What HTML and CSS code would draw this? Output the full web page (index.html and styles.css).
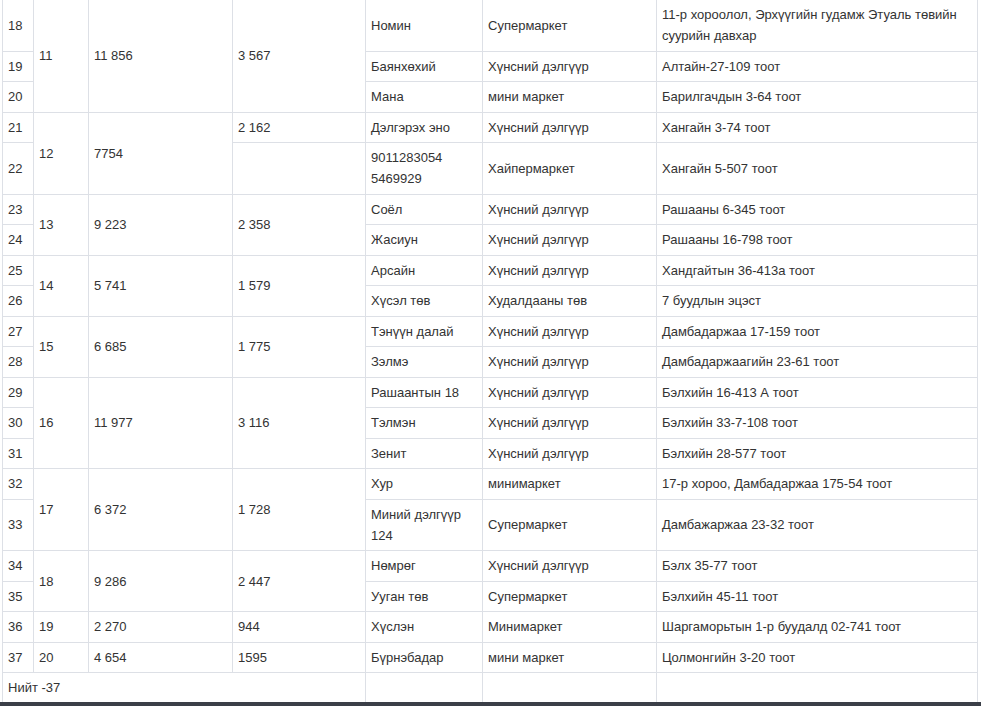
FILE: index.html
```html
<!DOCTYPE html>
<html lang="mn">
<head>
<meta charset="utf-8">
<title>Дэлгүүрүүд</title>
<link rel="stylesheet" href="styles.css">
</head>
<body>
<main class="page">
<table class="shops">
<colgroup>
<col class="c1"><col class="c2"><col class="c3"><col class="c4"><col class="c5"><col class="c6"><col class="c7">
</colgroup>
<tbody>
<tr><td>18</td><td rowspan="3">11</td><td rowspan="3">11 856</td><td rowspan="3">3 567</td><td>Номин</td><td>Супермаркет</td><td>11-р хороолол, Эрхүүгийн гудамж Этуаль төвийн суурийн давхар</td></tr>
<tr><td>19</td><td>Баянхөхий</td><td>Хүнсний дэлгүүр</td><td>Алтайн-27-109 тоот</td></tr>
<tr><td>20</td><td>Мана</td><td>мини маркет</td><td>Барилгачдын 3-64 тоот</td></tr>
<tr><td>21</td><td rowspan="2">12</td><td rowspan="2">7754</td><td>2 162</td><td>Дэлгэрэх эно</td><td>Хүнсний дэлгүүр</td><td>Хангайн 3-74 тоот</td></tr>
<tr><td>22</td><td></td><td>9011283054 5469929</td><td>Хайпермаркет</td><td>Хангайн 5-507 тоот</td></tr>
<tr><td>23</td><td rowspan="2">13</td><td rowspan="2">9 223</td><td rowspan="2">2 358</td><td>Соёл</td><td>Хүнсний дэлгүүр</td><td>Рашааны 6-345 тоот</td></tr>
<tr><td>24</td><td>Жасиун</td><td>Хүнсний дэлгүүр</td><td>Рашааны 16-798 тоот</td></tr>
<tr><td>25</td><td rowspan="2">14</td><td rowspan="2">5 741</td><td rowspan="2">1 579</td><td>Арсайн</td><td>Хүнсний дэлгүүр</td><td>Хандгайтын 36-413а тоот</td></tr>
<tr><td>26</td><td>Хүсэл төв</td><td>Худалдааны төв</td><td>7 буудлын эцэст</td></tr>
<tr><td>27</td><td rowspan="2">15</td><td rowspan="2">6 685</td><td rowspan="2">1 775</td><td>Тэнүүн далай</td><td>Хүнсний дэлгүүр</td><td>Дамбадаржаа 17-159 тоот</td></tr>
<tr><td>28</td><td>Зэлмэ</td><td>Хүнсний дэлгүүр</td><td>Дамбадаржаагийн 23-61 тоот</td></tr>
<tr><td>29</td><td rowspan="3">16</td><td rowspan="3">11 977</td><td rowspan="3">3 116</td><td>Рашаантын 18</td><td>Хүнсний дэлгүүр</td><td>Бэлхийн 16-413 А тоот</td></tr>
<tr><td>30</td><td>Тэлмэн</td><td>Хүнсний дэлгүүр</td><td>Бэлхийн 33-7-108 тоот</td></tr>
<tr><td>31</td><td>Зенит</td><td>Хүнсний дэлгүүр</td><td>Бэлхийн 28-577 тоот</td></tr>
<tr><td>32</td><td rowspan="2">17</td><td rowspan="2">6 372</td><td rowspan="2">1 728</td><td>Хур</td><td>минимаркет</td><td>17-р хороо, Дамбадаржаа 175-54 тоот</td></tr>
<tr><td>33</td><td>Миний дэлгүүр 124</td><td>Супермаркет</td><td>Дамбажаржаа 23-32 тоот</td></tr>
<tr><td>34</td><td rowspan="2">18</td><td rowspan="2">9 286</td><td rowspan="2">2 447</td><td>Нөмрөг</td><td>Хүнсний дэлгүүр</td><td>Бэлх 35-77 тоот</td></tr>
<tr><td>35</td><td>Ууган төв</td><td>Супермаркет</td><td>Бэлхийн 45-11 тоот</td></tr>
<tr><td>36</td><td>19</td><td>2 270</td><td>944</td><td>Хүслэн</td><td>Минимаркет</td><td>Шаргаморьтын 1-р буудалд 02-741 тоот</td></tr>
<tr><td>37</td><td>20</td><td>4 654</td><td>1595</td><td>Бүрнэбадар</td><td>мини маркет</td><td>Цолмонгийн 3-20 тоот</td></tr>
<tr><td colspan="4">Нийт -37</td><td></td><td></td><td></td></tr>
</tbody>
</table>
</main>
<footer class="footer-bar"></footer>
</body>
</html>
```

FILE: styles.css
```css
html, body {
  margin: 0;
  padding: 0;
  background: #ffffff;
}

body {
  font-family: "Liberation Sans", Arial, sans-serif;
  font-size: 13px;
  color: #333333;
}

.page {
  padding-left: 2px;
}

.shops {
  border-collapse: collapse;
  table-layout: fixed;
  width: 976px;
}

.c1 { width: 31px; }
.c2 { width: 55px; }
.c3 { width: 144px; }
.c4 { width: 133px; }
.c5 { width: 117px; }
.c6 { width: 174px; }
.c7 { width: 321px; }

.shops td {
  border: 1px solid #dde0e6;
  padding: 4.25px 5px;
  line-height: 21px;
  vertical-align: middle;
  text-align: left;
}

.shops tr:first-child td {
  border-top: 0;
}

.shops tr:last-child td {
  border-bottom: 0;
  padding-bottom: 3.25px;
}

.footer-bar {
  height: 12px;
  background: #3b3f48;
}
```
